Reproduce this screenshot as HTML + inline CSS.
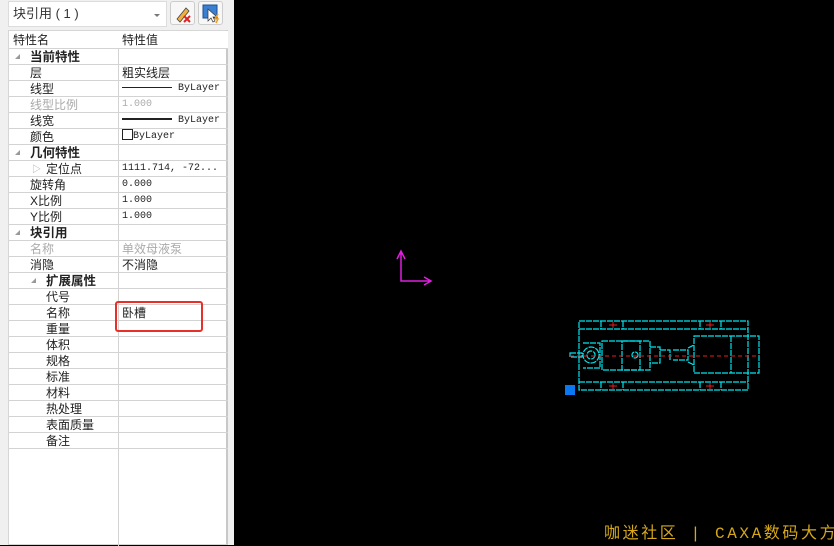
<!DOCTYPE html>
<html><head><meta charset="utf-8"><style>
*{margin:0;padding:0;box-sizing:border-box}
body{width:834px;height:545px;overflow:hidden;background:#000;position:relative;font-family:"Liberation Sans","Noto Sans CJK SC",sans-serif;font-size:12px;color:#222}
#panel{position:absolute;left:0;top:0;width:234px;height:545px;background:#f0f0f0}
#combo{position:absolute;left:8px;top:1px;width:159px;height:26px;background:#fff;border:1px solid #dcdcdc;font-size:13px;line-height:24px;padding-left:4px;color:#333}
#combo:after{content:"";position:absolute;right:6px;top:12px;border:3px solid transparent;border-top:3px solid #777}
.btn{position:absolute;top:1px;width:25px;height:24px;border:1px solid #ccc;border-radius:3px;background:#f7f7f7}
#grid{position:absolute;left:8px;top:30px;width:220px;height:515px;background:#fff;border:1px solid #d6d6d6;border-right:2px solid #c8c8c8}
.r{position:absolute;left:0;width:219px;height:16px;border-bottom:1px solid #d3d3d3;line-height:16px;white-space:nowrap;overflow:hidden}
.n{position:absolute;left:21px;top:0}
.v{position:absolute;left:113px;top:0;font-family:"Liberation Mono","Noto Sans CJK SC",monospace;font-size:10px}
.vc{position:absolute;left:113px;top:0}
.g{color:#aaa}
.cat{font-weight:bold;font-size:12.5px}
.tri{position:absolute;left:6px;top:5px;width:0;height:0;border-left:5px solid transparent;border-bottom:5px solid #999}
#col{position:absolute;left:109px;top:0;width:1px;height:515px;background:#d3d3d3}
#box{position:absolute;left:115px;top:301px;width:88px;height:31px;border:2px solid #e8302a;border-radius:3px}
#wm{position:absolute;left:604px;top:519px;font-family:"Liberation Mono","Noto Sans CJK SC",monospace;font-size:16px;color:#d6a81a;letter-spacing:2.6px;white-space:nowrap}
</style></head><body>
<div id="panel">
<div id="combo">块引用 ( 1 )</div>
<div class="btn" style="left:170px"><svg width="25" height="24"><path d="M6 17 L15 6 L18 9 L9 20 Z" fill="#f0b040" stroke="#444" stroke-width="0.8"/><path d="M13 14 L19 20 M19 14 L13 20" stroke="#d22" stroke-width="2"/></svg></div>
<div class="btn" style="left:198px"><svg width="25" height="24"><rect x="4" y="3" width="14" height="13" fill="#3a7fd0" stroke="#1a4f90"/><path d="M9 7 L9 19 L12 16 L14 20 L16 19 L14 15 L18 15 Z" fill="#fff" stroke="#333" stroke-width="0.7"/><path d="M19 12 L16 17 L19 17 L17 21" stroke="#f0a020" stroke-width="1.5" fill="none"/></svg></div>
<div id="grid">
<div id="col"></div>
<div class="r" style="top:0;height:18px;line-height:18px;background:#fff"><span class="n" style="left:4px">特性名</span><span class="vc">特性值</span></div>
<div class="r" style="top:18px"><i class="tri"></i><span class="n cat">当前特性</span></div>
<div class="r" style="top:34px"><span class="n">层</span><span class="vc">粗实线层</span></div>
<div class="r" style="top:50px"><span class="v"><b style="display:inline-block;width:50px;height:1px;background:#222;vertical-align:middle;margin-right:6px"></b>ByLayer</span><span class="n">线型</span></div>
<div class="r g" style="top:66px"><span class="n">线型比例</span><span class="v">1.000</span></div>
<div class="r" style="top:82px"><span class="n">线宽</span><span class="v"><b style="display:inline-block;width:50px;height:2px;background:#222;vertical-align:middle;margin-right:6px"></b>ByLayer</span></div>
<div class="r" style="top:98px"><span class="n">颜色</span><span class="v"><b style="display:inline-block;width:11px;height:11px;border:1px solid #222;vertical-align:-2px"></b>ByLayer</span></div>
<div class="r" style="top:114px"><i class="tri"></i><span class="n cat">几何特性</span></div>
<div class="r" style="top:130px"><span class="n" style="left:23px;color:#aaa;font-size:9px">▷</span><span class="n" style="left:37px">定位点</span><span class="v">1111.714, -72...</span></div>
<div class="r" style="top:146px"><span class="n">旋转角</span><span class="v">0.000</span></div>
<div class="r" style="top:162px"><span class="n">X比例</span><span class="v">1.000</span></div>
<div class="r" style="top:178px"><span class="n">Y比例</span><span class="v">1.000</span></div>
<div class="r" style="top:194px"><i class="tri"></i><span class="n cat">块引用</span></div>
<div class="r g" style="top:210px"><span class="n">名称</span><span class="vc">单效母液泵</span></div>
<div class="r" style="top:226px"><span class="n">消隐</span><span class="vc">不消隐</span></div>
<div class="r" style="top:242px"><i class="tri" style="left:22px"></i><span class="n cat" style="left:37px">扩展属性</span></div>
<div class="r" style="top:258px"><span class="n" style="left:37px">代号</span></div>
<div class="r" style="top:274px"><span class="n" style="left:37px">名称</span><span class="vc">卧槽</span></div>
<div class="r" style="top:290px"><span class="n" style="left:37px">重量</span></div>
<div class="r" style="top:306px"><span class="n" style="left:37px">体积</span></div>
<div class="r" style="top:322px"><span class="n" style="left:37px">规格</span></div>
<div class="r" style="top:338px"><span class="n" style="left:37px">标准</span></div>
<div class="r" style="top:354px"><span class="n" style="left:37px">材料</span></div>
<div class="r" style="top:370px"><span class="n" style="left:37px">热处理</span></div>
<div class="r" style="top:386px"><span class="n" style="left:37px">表面质量</span></div>
<div class="r" style="top:402px"><span class="n" style="left:37px">备注</span></div>
</div>
<div id="box"></div>
</div>
<svg style="position:absolute;left:0;top:0" width="834" height="545">
<g stroke="#e020e0" stroke-width="1.5" fill="none"><path d="M401 251 V281 H431 M397 259 L401 251 L405 259 M424 277 L431 281 L424 285"/></g>
<g stroke="#00e5ee" stroke-width="1.2" fill="none" stroke-dasharray="6 1">
<rect x="579" y="321" width="169" height="69"/>
<path d="M579 329 H748 M579 382 H748 M601 321 V329 M623 321 V329 M700 321 V329 M721 321 V329 M601 382 V390 M623 382 V390 M700 382 V390 M721 382 V390"/>
<rect x="602" y="341" width="38" height="29"/>
<rect x="622" y="341" width="28" height="29"/>
<rect x="694" y="336" width="65" height="37"/>
<path d="M731 336 V373 M650 347 H660 V363 H650 M660 350 H670 V360 M673 350 H688 V360 H673 M688 348 L694 345 M688 362 L694 365"/>
<circle cx="591" cy="355" r="8"/><circle cx="591" cy="355" r="4"/><circle cx="635" cy="355" r="3"/>
<path d="M570 353 H582 V357 H570 Z M583 343 H600 V368 H583"/>
</g>
<path d="M570 356 H760" stroke="#e02020" stroke-width="1" stroke-dasharray="4 3"/>
<g stroke="#e02020" stroke-width="1"><path d="M609 325 H617 M613 322 V328 M706 325 H714 M710 322 V328 M609 386 H617 M613 383 V389 M706 386 H714 M710 383 V389"/></g>
<rect x="565" y="385" width="10" height="10" fill="#0a78f0"/>
</svg>
<div id="wm">咖迷社区 | CAXA数码大方</div>
</body></html>
